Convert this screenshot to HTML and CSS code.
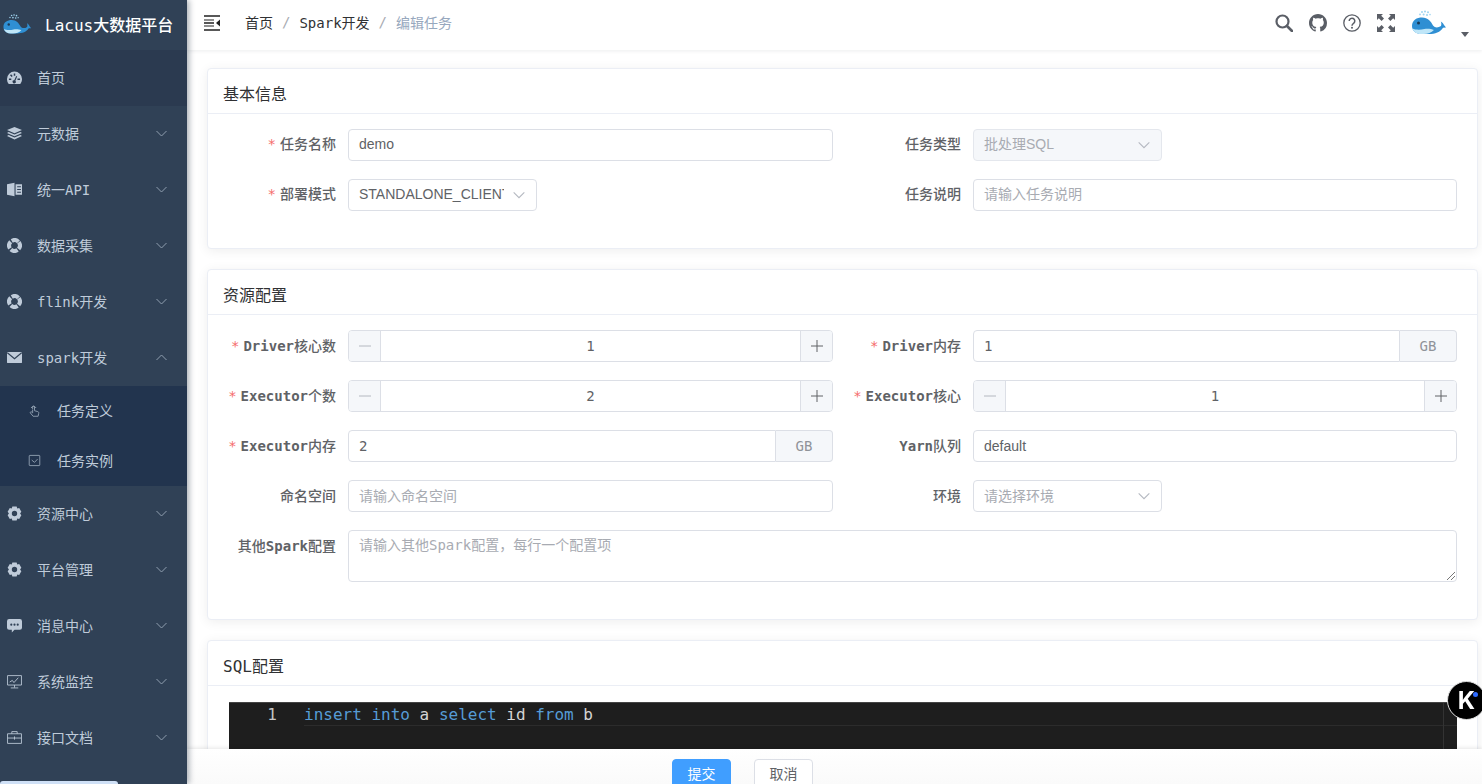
FILE: index.html
```html
<!DOCTYPE html>
<html lang="zh">
<head>
<meta charset="utf-8">
<title>Lacus大数据平台</title>
<link rel="stylesheet" href="styles.css">
</head>
<body>
<svg class="defs" width="0" height="0" aria-hidden="true">
  <symbol id="whale" viewBox="0 0 38 26">
    <g fill="#9fd4f0"><circle cx="13" cy="2" r="1"/><circle cx="16" cy="1.4" r="1"/><circle cx="19" cy="2.2" r="1"/><circle cx="11" cy="4.4" r=".9"/><circle cx="14.6" cy="4.6" r="1"/><circle cx="18" cy="5" r="1"/><circle cx="21" cy="4.6" r=".8"/></g>
    <path fill="#2f8fd3" d="M3 16C3 10 8 7.500 13 7.500c6 0 9 4 11 8 2 2.500 5 2.500 8 .5 .6-1.600 .4-3 -.2-4.500 1.500 .8 2.600 2 3.200 3.600l2 2.400-3 .2c-2.500 4.300-8 6.300-14 6.300H13C7 24 3 21 3 16z"/>
    <path fill="#bfe6f8" d="M3.400 18.500c3 1.500 8 1.500 12 .5 3-.5 7-.2 9.500 1-2.500 2.600-6 4-10 4H12c-4.500 0-7.500-2.200-8.600-5.500z"/>
    <circle cx="9.500" cy="13" r="1.500" fill="#1b3a55"/>
  </symbol>
  <symbol id="i-dash" viewBox="0 0 14 14"><path fill="currentColor" fill-rule="evenodd" d="M7 1.500a7 7 0 0 1 7 7c0 1.800-.6 3.300-1.600 4.500H1.600A6.800 6.800 0 0 1 0 8.500a7 7 0 0 1 7-7zM6.300 3.200v2.200h1.400V3.200zM2.800 5l1.500 1.500 1-1L3.800 4zM1.800 8v1.400H4V8zm8 0v1.400H12.200V8zM7.800 10l1.700-3.900-.9-.4L6.800 9.500A1.500 1.500 0 1 0 7.800 10z"/></symbol>
  <symbol id="i-layers" viewBox="0 0 14 14"><path fill="currentColor" d="M7 1l7 2.800-7 3-7-3zM1.500 5.700L7 8l5.500-2.300L14 6.600l-7 3-7-3zM1.500 8.500L7 10.800l5.500-2.300 1.500.9-7 3.200-7-3.200z"/></symbol>
  <symbol id="i-book" viewBox="0 0 14 14"><path fill="currentColor" fill-rule="evenodd" d="M0 2L7 .8v12.400L0 12zM8 2h6v10H8zM9.500 4v1H13V4zm0 2.500v1H13v-1zM9.500 9v1H13V9z"/></symbol>
  <symbol id="i-ring" viewBox="0 0 14 14"><circle cx="7" cy="7" r="5" fill="none" stroke="currentColor" stroke-width="3.800" stroke-dasharray="6.500 1.354" transform="rotate(-37 7 7)"/></symbol>
  <symbol id="i-mail" viewBox="0 0 14 14"><path fill="currentColor" d="M.8 1.800h12.400a.8.8 0 0 1 .8.8v8.800a.8.8 0 0 1-.8.8H.8a.8.8 0 0 1-.8-.8V2.600a.8.8 0 0 1 .8-.8z"/><path fill="none" stroke="#304156" stroke-width="1.100" d="M.3 2.500L7 8.200l6.700-5.700"/></symbol>
  <symbol id="i-gear" viewBox="0 0 14 14"><path fill="currentColor" fill-rule="evenodd" d="M5 .5h4l.6 1.800 1.800-.4 2 3.400-1.200 1.700 1.200 1.700-2 3.400-1.800-.4L9 13.500H5l-.6-1.800-1.800.4-2-3.400L1.800 7 .6 5.300l2-3.400 1.800.4zM7 4.500a2.500 2.500 0 1 0 0 5 2.500 2.500 0 0 0 0-5z"/></symbol>
  <symbol id="i-chat" viewBox="0 0 14 14"><path fill="currentColor" fill-rule="evenodd" d="M2 1h10a2 2 0 0 1 2 2v6a2 2 0 0 1-2 2H7l-2.500 2.500V11H2a2 2 0 0 1-2-2V3a2 2 0 0 1 2-2zm2 4.200a1 1 0 1 0 0 2 1 1 0 0 0 0-2zm3 0a1 1 0 1 0 0 2 1 1 0 0 0 0-2zm3 0a1 1 0 1 0 0 2 1 1 0 0 0 0-2z"/></symbol>
  <symbol id="i-monitor" viewBox="0 0 14 14"><path fill="none" stroke="currentColor" stroke-width=".8" d="M.5 1.500h13v8.800H.5zM7 10.300v2.400M3.500 13h7M2.500 7.500l2.500-1.500 1.500 2L10.500 3.500"/></symbol>
  <symbol id="i-case" viewBox="0 0 14 14"><path fill="none" stroke="currentColor" stroke-width=".8" d="M.5 3.500h13v9h-13zM4.500 3.500v-2h5v2M.5 7.500h13M7 6v3"/></symbol>
  <symbol id="i-touch" viewBox="0 0 14 14"><path fill="none" stroke="currentColor" d="M5 5.500V3.200a1 1 0 0 1 2 0v4l3.500 1c1 .3 1.200 1 1 2l-.6 3H5.500L2.600 9.700c-.6-.9.500-1.800 1.300-1.100L5 9.500V6M3.300 4.300a3 3 0 0 1 5.400 0"/></symbol>
  <symbol id="i-check" viewBox="0 0 14 14"><path fill="none" stroke="currentColor" d="M2 1.500h10a.7.7 0 0 1 .7.7v9.600a.7.7 0 0 1-.7.7H2a.7.7 0 0 1-.7-.7V2.200A.7.7 0 0 1 2 1.500zM4 6.500l3 2.500 3.300-3.500"/></symbol>
  <symbol id="i-down" viewBox="0 0 12 12"><path fill="none" stroke="currentColor" stroke-width=".8" d="M2 4l4 4 4-4"/></symbol>
  <symbol id="i-plus" viewBox="0 0 12 12"><path fill="none" stroke="currentColor" d="M0 6h12M6 0v12"/></symbol>
  <symbol id="i-minus" viewBox="0 0 12 12"><path fill="none" stroke="currentColor" d="M0 6h12"/></symbol>
</svg>

<div class="app">
  <aside class="sidebar">
    <div class="logo"><svg class="logo-img"><use href="#whale"/></svg><span class="logo-text">Lacus大数据平台</span></div>
    <nav class="menu">
      <div class="item current"><svg class="ico"><use href="#i-dash"/></svg><span>首页</span></div>
      <div class="item"><svg class="ico"><use href="#i-layers"/></svg><span>元数据</span><svg class="arrow"><use href="#i-down"/></svg></div>
      <div class="item"><svg class="ico"><use href="#i-book"/></svg><span>统一API</span><svg class="arrow"><use href="#i-down"/></svg></div>
      <div class="item"><svg class="ico"><use href="#i-ring"/></svg><span>数据采集</span><svg class="arrow"><use href="#i-down"/></svg></div>
      <div class="item"><svg class="ico"><use href="#i-ring"/></svg><span>flink开发</span><svg class="arrow"><use href="#i-down"/></svg></div>
      <div class="item"><svg class="ico"><use href="#i-mail"/></svg><span>spark开发</span><svg class="arrow up"><use href="#i-down"/></svg></div>
      <div class="sub">
        <div class="sub-item"><svg class="sub-ico"><use href="#i-touch"/></svg><span>任务定义</span></div>
        <div class="sub-item"><svg class="sub-ico"><use href="#i-check"/></svg><span>任务实例</span></div>
      </div>
      <div class="item"><svg class="ico"><use href="#i-gear"/></svg><span>资源中心</span><svg class="arrow"><use href="#i-down"/></svg></div>
      <div class="item"><svg class="ico"><use href="#i-gear"/></svg><span>平台管理</span><svg class="arrow"><use href="#i-down"/></svg></div>
      <div class="item"><svg class="ico"><use href="#i-chat"/></svg><span>消息中心</span><svg class="arrow"><use href="#i-down"/></svg></div>
      <div class="item"><svg class="ico"><use href="#i-monitor"/></svg><span>系统监控</span><svg class="arrow"><use href="#i-down"/></svg></div>
      <div class="item"><svg class="ico"><use href="#i-case"/></svg><span>接口文档</span><svg class="arrow"><use href="#i-down"/></svg></div>
    </nav>
    <div class="thumb"></div>
  </aside>

  <main class="main">
    <header class="navbar">
      <svg class="hamburger" viewBox="0 0 16 16"><path fill="none" stroke="#222" stroke-width="1.600" d="M0 1h16M0 15h16M0 8h10"/><path fill="none" stroke="#222" stroke-width="1.200" d="M0 5h10M0 11h10"/><path fill="#222" d="M16 4.500v7L12 8z"/></svg>
      <div class="crumbs"><span class="crumb">首页</span><span class="slash">/</span><span class="crumb">Spark开发</span><span class="slash">/</span><span class="crumb last">编辑任务</span></div>
      <div class="tools">
        <svg class="tool" viewBox="0 0 18 18"><circle cx="7.500" cy="7.500" r="6" fill="none" stroke="#5a5e66" stroke-width="2.200"/><path stroke="#5a5e66" stroke-width="2.600" stroke-linecap="round" d="M12 12l5 5"/></svg>
        <svg class="tool" viewBox="0 0 16 16"><path fill="#5a5e66" d="M8 0C3.580 0 0 3.580 0 8c0 3.540 2.290 6.530 5.470 7.590.4.070.55-.17.55-.38 0-.19-.01-.82-.01-1.490-2.010.37-2.530-.49-2.690-.94-.09-.23-.48-.94-.82-1.130-.28-.15-.68-.52-.01-.53.63-.01 1.080.58 1.230.82.72 1.210 1.870.87 2.330.66.07-.52.28-.87.51-1.070-1.780-.2-3.640-.89-3.640-3.950 0-.87.31-1.590.82-2.150-.08-.2-.36-1.020.08-2.120 0 0 .67-.21 2.200.82.64-.18 1.320-.27 2-.27.68 0 1.360.09 2 .27 1.530-1.040 2.200-.82 2.200-.82.44 1.100.16 1.920.08 2.120.51.56.82 1.270.82 2.150 0 3.070-1.870 3.750-3.650 3.950.29.25.54.73.54 1.480 0 1.070-.01 1.930-.01 2.200 0 .21.15.46.55.38A8.013 8.013 0 0016 8c0-4.420-3.580-8-8-8z"/></svg>
        <svg class="tool" viewBox="0 0 18 18"><circle cx="9" cy="9" r="8.200" fill="none" stroke="#5a5e66" stroke-width="1.300"/><path fill="none" stroke="#5a5e66" stroke-width="1.500" d="M6.200 7a2.800 2.800 0 1 1 4.400 2.300c-1 .7-1.600 1.100-1.600 2.400"/><circle cx="9" cy="13.800" r="1" fill="#5a5e66"/></svg>
        <svg class="tool" viewBox="0 0 18 18"><path fill="#5a5e66" d="M0 0h6L4.200 1.800 7 4.600 4.600 7 1.800 4.200 0 6zM18 0v6l-1.800-1.800L13.400 7 11 4.600l2.800-2.800L12 0zM0 18v-6l1.800 1.800L4.600 11 7 13.400l-2.800 2.800L6 18zM18 18h-6l1.800-1.800L11 13.400 13.400 11l2.800 2.800L18 12z"/></svg>
        <svg class="avatar"><use href="#whale"/></svg>
        <span class="caret"></span>
      </div>
    </header>

    <div class="content">
      <section class="card">
        <h2 class="card-title">基本信息</h2>
        <div class="form">
          <div class="row"><label class="label req">任务名称</label><div class="ctl"><div class="field"><span class="val">demo</span></div></div></div>
          <div class="row"><label class="label">任务类型</label><div class="ctl"><div class="field select disabled"><span class="val clip">批处理SQL</span><svg class="sel-arrow"><use href="#i-down"/></svg></div></div></div>
          <div class="row"><label class="label req">部署模式</label><div class="ctl"><div class="field select"><span class="val clip">STANDALONE_CLIENT</span><svg class="sel-arrow"><use href="#i-down"/></svg></div></div></div>
          <div class="row"><label class="label">任务说明</label><div class="ctl"><div class="field"><span class="ph">请输入任务说明</span></div></div></div>
        </div>
      </section>

      <section class="card">
        <h2 class="card-title">资源配置</h2>
        <div class="form resources">
          <div class="row"><label class="label req"><b class="lat">Driver</b>核心数</label><div class="ctl"><div class="stepper"><span class="step minus"><svg class="glyph"><use href="#i-minus"/></svg></span><span class="num">1</span><span class="step plus"><svg class="glyph"><use href="#i-plus"/></svg></span></div></div></div>
          <div class="row"><label class="label req"><b class="lat">Driver</b>内存</label><div class="ctl"><div class="group"><div class="field"><span class="val mono">1</span></div><span class="append">GB</span></div></div></div>
          <div class="row"><label class="label req"><b class="lat">Executor</b>个数</label><div class="ctl"><div class="stepper"><span class="step minus"><svg class="glyph"><use href="#i-minus"/></svg></span><span class="num">2</span><span class="step plus"><svg class="glyph"><use href="#i-plus"/></svg></span></div></div></div>
          <div class="row"><label class="label req"><b class="lat">Executor</b>核心</label><div class="ctl"><div class="stepper"><span class="step minus"><svg class="glyph"><use href="#i-minus"/></svg></span><span class="num">1</span><span class="step plus"><svg class="glyph"><use href="#i-plus"/></svg></span></div></div></div>
          <div class="row"><label class="label req"><b class="lat">Executor</b>内存</label><div class="ctl"><div class="group"><div class="field"><span class="val mono">2</span></div><span class="append">GB</span></div></div></div>
          <div class="row"><label class="label"><b class="lat">Yarn</b>队列</label><div class="ctl"><div class="field"><span class="val">default</span></div></div></div>
          <div class="row"><label class="label">命名空间</label><div class="ctl"><div class="field"><span class="ph">请输入命名空间</span></div></div></div>
          <div class="row"><label class="label">环境</label><div class="ctl"><div class="field select"><span class="ph clip">请选择环境</span><svg class="sel-arrow"><use href="#i-down"/></svg></div></div></div>
          <div class="row wide"><label class="label">其他<b class="lat">Spark</b>配置</label><div class="ctl"><div class="area"><span class="ph">请输入其他Spark配置，每行一个配置项</span><svg class="grip" viewBox="0 0 9 9"><path stroke="#777" fill="none" d="M1 9l8-8M5 9l4-4"/></svg></div></div></div>
        </div>
      </section>

      <section class="card">
        <h2 class="card-title">SQL配置</h2>
        <div class="editor-wrap">
          <div class="editor">
            <span class="gutter">1</span>
            <div class="code"><span class="kw">insert</span> <span class="kw">into</span> a <span class="kw">select</span> id <span class="kw">from</span> b</div>
            <span class="ruler"></span>
          </div>
        </div>
      </section>
    </div>

    <footer class="footer">
      <button class="btn primary">提交</button>
      <button class="btn">取消</button>
    </footer>
  </main>
</div>

<div class="kbadge"><span class="k">K</span><span class="dot"></span></div>
</body>
</html>
```

FILE: styles.css
```css
* { box-sizing: border-box; }
html, body { margin: 0; height: 100%; overflow: hidden; }
body {
  font-family: "DejaVu Sans Mono", "Noto Sans CJK SC", monospace;
  font-size: 14px;
  color: #606266;
  background: #fff;
}
.defs { position: absolute; }
.app { display: flex; height: 784px; }

/* sidebar */
.sidebar {
  flex: 0 0 187px;
  background: #304156;
  box-shadow: 2px 0 6px rgba(0, 21, 41, .35);
  position: relative;
  z-index: 3;
  overflow: hidden;
}
.logo { height: 50px; display: flex; align-items: center; padding: 0 0 2px 1px; }
.logo-img { width: 31px; height: 23px; margin-right: 13px; flex: none; }
.logo-text { color: #fff; font-size: 16px; font-weight: 500; white-space: nowrap; }
.item {
  height: 56px;
  display: flex;
  align-items: center;
  padding: 0 0 2px 7px;
  color: #bfcbd9;
  position: relative;
}
.item.current { background: #2b3a50; }
.ico { width: 15px; height: 15px; margin-right: 15px; flex: none; }
.arrow { width: 15px; height: 15px; position: absolute; left: 153.500px; top: 19.500px; color: #909fb0; }
.arrow.up { transform: rotate(180deg); }
.sub { background: #22344e; }
.sub-item {
  height: 50px;
  display: flex;
  align-items: center;
  padding: 0 0 2px 28px;
  color: #bfcbd9;
}
.sub-ico { width: 13px; height: 13px; margin-right: 16px; flex: none; color: #909fb0; }
.thumb {
  position: absolute;
  left: 0;
  bottom: 0;
  width: 118px;
  height: 3px;
  background: #cfe0f6;
  border-radius: 3px 3px 0 0;
}

/* main */
.main { flex: 1; min-width: 0; display: flex; flex-direction: column; height: 784px; }
.navbar {
  flex: 0 0 50px;
  height: 50px;
  display: flex;
  align-items: center;
  padding-left: 17px;
  background: #fff;
  box-shadow: 0 1px 4px rgba(0, 21, 41, .08);
  position: relative;
  z-index: 2;
}
.hamburger { width: 16px; height: 16px; margin-right: 25px; margin-top: -4px; flex: none; }
.crumbs { display: flex; align-items: center; margin-top: -6px; color: #303133; }
.slash { margin: 0 9px; color: #a8abb2; }
.crumb.last { color: #97a8be; }
.tools { margin-left: auto; display: flex; align-items: center; margin-top: -4px; padding-right: 12px; position: relative; }
.tool { width: 18px; height: 18px; margin-right: 16px; flex: none; }
.avatar { width: 38px; height: 26px; margin-left: -2px; margin-right: 23px; flex: none; }
.caret {
  position: absolute;
  right: 13px;
  top: 22px;
  border: 4px solid transparent;
  border-top: 5px solid #5a5e66;
  border-bottom: 0;
}

/* content */
.content { flex: 1; min-height: 0; overflow: hidden; padding: 18px 4px 0 20px; background: #fff; }
.card {
  background: #fff;
  border: 1px solid #ebeef5;
  border-radius: 4px;
  box-shadow: 0 2px 12px rgba(0, 0, 0, .07);
  margin-bottom: 20px;
}
.card-title {
  margin: 0;
  height: 45px;
  padding: 4px 15px 0;
  display: flex;
  align-items: center;
  font-size: 16px;
  font-weight: 400;
  color: #303133;
  border-bottom: 1px solid #ebeef5;
}
.form {
  display: grid;
  grid-template-columns: 605px 604px;
  column-gap: 20px;
  row-gap: 18px;
  padding: 15px 20px 37px 20px;
}
.row { display: flex; align-items: flex-start; }
.row.wide { grid-column: 1 / -1; }
.label {
  flex: 0 0 120px;
  height: 32px;
  line-height: 31px;
  padding-right: 12px;
  text-align: right;
  font-weight: 500;
  color: #606266;
  white-space: nowrap;
}
.lat { font-weight: 700; }
.label.req::before { content: "*"; color: #f56c6c; margin-right: 4px; }
.resources .label { line-height: 33px; }
.ctl { flex: 1; min-width: 0; }
.field {
  height: 32px;
  flex: 1;
  min-width: 0;
  border: 1px solid #dcdfe6;
  border-radius: 4px;
  padding: 0 10px 2px;
  display: flex;
  align-items: center;
  line-height: 17px;
  background: #fff;
  font-family: "Liberation Sans", "Noto Sans CJK SC", sans-serif;
  color: #606266;
}
.resources .field { padding-bottom: 0; }
.val { white-space: nowrap; }
.val.mono { font-family: "DejaVu Sans Mono", monospace; }
.ph { color: #a8abb2; white-space: nowrap; }
.select { width: 189px; position: relative; padding-right: 32px; }
.clip { overflow: hidden; flex: 1; }
.sel-arrow { position: absolute; width: 16px; height: 16px; right: 9px; top: 7px; color: #b4b8c0; }
.disabled { background: #f5f7fa; border-color: #e4e7ed; }
.disabled .val { color: #a8abb2; }
.stepper {
  height: 32px;
  display: flex;
  border: 1px solid #dcdfe6;
  border-radius: 4px;
  overflow: hidden;
}
.step {
  flex: 0 0 32px;
  background: #f5f7fa;
  display: flex;
  align-items: center;
  justify-content: center;
  color: #606266;
}
.glyph { width: 12px; height: 12px; }
.step.minus { border-right: 1px solid #dcdfe6; color: #b4b8c0; }
.step.plus { border-left: 1px solid #dcdfe6; }
.num { flex: 1; text-align: center; line-height: 30px; }
.group { display: flex; height: 32px; }
.group .field { border-radius: 4px 0 0 4px; }
.append {
  flex: 0 0 57px;
  background: #f5f7fa;
  border: 1px solid #dcdfe6;
  border-left: 0;
  border-radius: 0 4px 4px 0;
  text-align: center;
  line-height: 30px;
  color: #909399;
}
.area {
  height: 52px;
  border: 1px solid #dcdfe6;
  border-radius: 4px;
  padding: 4px 10px;
  line-height: 21px;
  position: relative;
}
.grip { position: absolute; right: 1px; bottom: 1px; width: 9px; height: 9px; }

/* editor */
.editor-wrap { padding: 16px 20px 20px 21px; }
.editor {
  height: 300px;
  background: #1e1e1e;
  position: relative;
  display: flex;
  font-size: 16px;
  color: #d4d4d4;
  border-top: 1px solid #444;
}
.gutter { flex: 0 0 75px; padding-right: 27px; text-align: right; line-height: 24px; color: #c6c6c6; }
.code {
  flex: 1;
  height: 23px;
  line-height: 24px;
  border-bottom: 1px solid #2c2c2c;
  white-space: pre;
}
.kw { color: #569cd6; }
.ruler { position: absolute; right: 13px; top: 0; bottom: 0; width: 1px; background: #333; }

/* footer */
.footer {
  flex: 0 0 35px;
  height: 35px;
  overflow: hidden;
  display: flex;
  gap: 23px;
  padding: 10px 0 0 485px;
  background: linear-gradient(#fff, #fafafa);
  box-shadow: 0 -1px 4px rgba(0, 0, 0, .1);
  position: relative;
  z-index: 2;
}
.btn {
  width: 59px;
  height: 32px;
  padding: 0 0 4px;
  flex: none;
  border: 1px solid #dcdfe6;
  border-radius: 4px;
  background: #fff;
  color: #606266;
  font: 14px "Liberation Sans", "Noto Sans CJK SC", sans-serif;
}
.btn.primary { background: #409eff; border-color: #409eff; color: #fff; }

/* floating badge */
.kbadge {
  position: fixed;
  left: 1447px;
  top: 681px;
  width: 39px;
  height: 39px;
  border-radius: 50%;
  background: #000;
  border: 1px solid #ddd;
  z-index: 5;
  display: flex;
  align-items: center;
  justify-content: center;
}
.k { color: #fff; font: 700 24px "Inter", sans-serif; }
.dot { position: absolute; left: 25px; top: 10px; width: 5px; height: 5px; border-radius: 50%; background: #2f6bff; }
```
